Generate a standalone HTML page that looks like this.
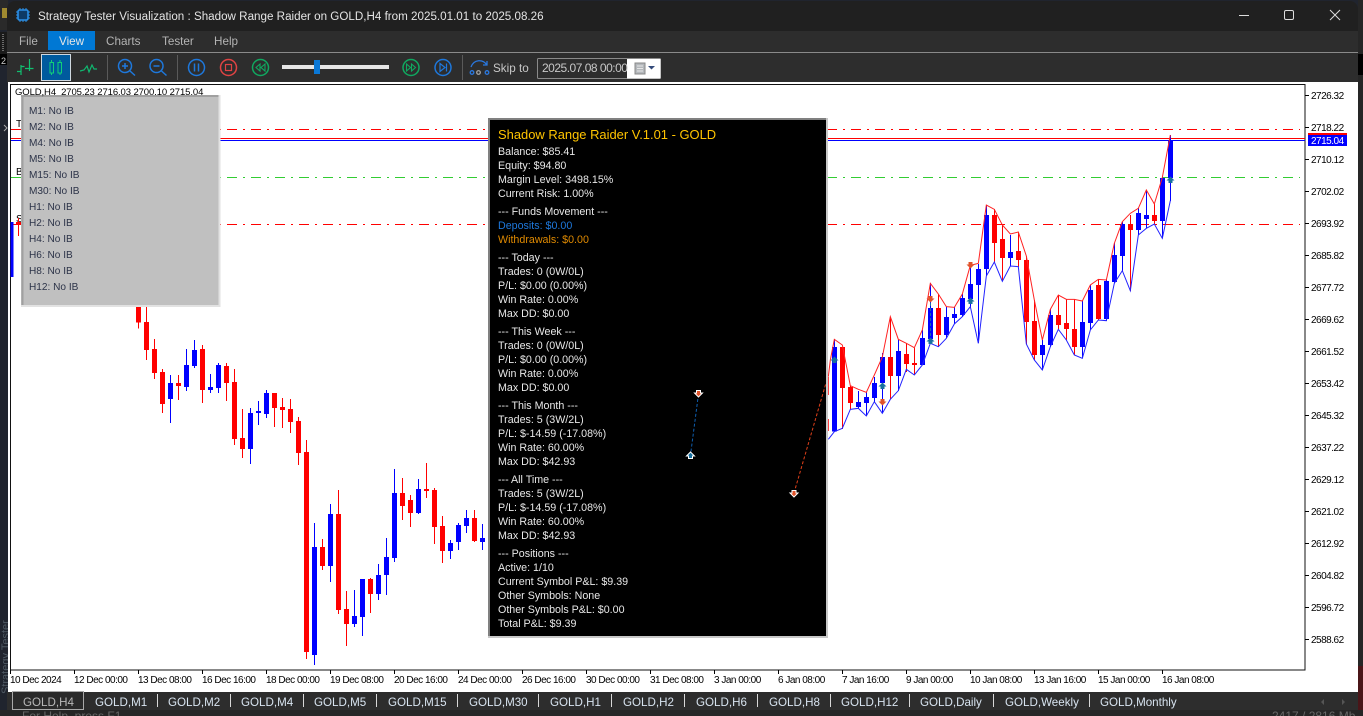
<!DOCTYPE html>
<html><head><meta charset="utf-8"><title>Strategy Tester Visualization</title>
<style>
html,body{margin:0;padding:0;width:1363px;height:716px;overflow:hidden;background:#20242e}
svg{position:absolute;left:0;top:0;font-family:"Liberation Sans",sans-serif}
text{white-space:pre}
.c path{shape-rendering:crispEdges;fill:none}
.m text{font-size:11.7px;fill:#b4b4b4}
.t text{font-size:11.6px;fill:#d8e4f0}
.p text{font-size:10px;fill:#000;letter-spacing:-.5px}
.d text{font-size:10px;fill:#000;letter-spacing:-.5px}
.ib text{font-size:10.1px;fill:#2c3348}
.k text{font-size:10.7px;fill:#e8e8e8}
.ic{fill:none;stroke-width:1.5}
.lv path{shape-rendering:crispEdges}
</style></head><body>
<svg width="1363" height="716" viewBox="0 0 1363 716">
<defs>
<g id="u"><polygon points="0,-3.5 4,0.5 2,0.5 2,3 -2,3 -2,0.5 -4,0.5" fill="#17709f"/></g>
<g id="n"><polygon points="0,3.5 4,-0.5 2,-0.5 2,-3 -2,-3 -2,-0.5 -4,-0.5" fill="#e0532a"/></g>
<g id="uw"><polygon points="0,-3.5 4,0.5 2,0.5 2,3 -2,3 -2,0.5 -4,0.5" fill="#17709f" stroke="#fff" stroke-width="1"/></g>
<g id="nw"><polygon points="0,3.5 4,-0.5 2,-0.5 2,-3 -2,-3 -2,-0.5 -4,-0.5" fill="#e0532a" stroke="#fff" stroke-width="1"/></g>
</defs>

<!-- outside desktop -->
<rect width="1363" height="716" fill="#20242e"/>
<rect x="0" y="0" width="8" height="30" fill="#2a2a2a"/>
<rect x="2" y="8" width="5" height="10" fill="#a08a30"/>
<rect x="0" y="32" width="8" height="22" fill="#1a1a1a"/>
<path d="M3 34V52" stroke="#bbb" stroke-dasharray="1 1" fill="none"/>
<rect x="0" y="54" width="8" height="11" fill="#000"/>
<text x="1" y="64" font-size="9" fill="#ccc">2</text>
<path d="M4 125l3 3-3 3" stroke="#aaa" fill="none"/>
<text transform="translate(9 694) rotate(-90)" font-size="11" fill="#4f5a64">Strategy Tester</text>
<rect x="1358" y="0" width="5" height="716" fill="#262626"/>
<rect x="1358" y="54" width="5" height="21" fill="#000"/>
<rect x="1358" y="666" width="5" height="44" fill="#4a1518"/>
<rect x="0" y="710" width="1363" height="6" fill="#262626"/>
<text x="22" y="720" font-size="12" fill="#666">For Help, press F1</text>
<text x="1272" y="720" font-size="12" fill="#666">2417 / 2816 Mb</text>

<!-- window chrome -->
<path d="M7 82V9a8 8 0 0 1 8-8H1350a8 8 0 0 1 8 8V82Z" fill="#202020"/>
<rect x="7" y="31" width="1351" height="52" fill="#2d2d2d"/>
<rect x="7" y="52" width="1351" height="1" fill="#8a8a8a"/>
<g>
<rect x="18" y="10" width="10" height="10" rx="1.5" fill="#0e3a66" stroke="#2a8fe8" stroke-width="1.6"/>
<path d="M20 8v2M23 8v2M26 8v2M20 20v2M23 20v2M26 20v2M16 12h2M16 15h2M16 18h2M28 12h2M28 15h2M28 18h2" stroke="#2a8fe8" fill="none"/>
</g>
<text x="38" y="20" font-size="11.64" fill="#e4e4e4">Strategy Tester Visualization : Shadow Range Raider on GOLD,H4 from 2025.01.01 to 2025.08.26</text>
<path d="M1239 15.5h10" stroke="#ddd"/>
<rect x="1284.5" y="10.5" width="9" height="9" rx="1.5" fill="none" stroke="#ddd"/>
<path d="M1330 10l10 10M1340 10l-10 10" stroke="#ddd" fill="none"/>

<!-- menu -->
<rect x="48" y="31" width="47" height="19" fill="#0078d4"/>
<g class="m">
<text x="19" y="45">File</text>
<text x="59" y="45" style="fill:#e6e6e6">View</text>
<text x="106" y="45">Charts</text>
<text x="162" y="45">Tester</text>
<text x="214" y="45">Help</text>
</g>

<!-- toolbar -->
<path d="M17 71.5h4M21 65v10M21.5 66.5h3M25 68.5h4M29.5 59v12M29.5 68.5h4" stroke="#10c070" fill="none" stroke-width="1.2"/>
<rect x="41.5" y="54.5" width="29" height="26" fill="#005a9e" stroke="#cfd8e0"/>
<path d="M51.5 60v15M60 60v15" stroke="#10d078"/>
<rect x="50" y="62.5" width="3.5" height="10.5" fill="#005a9e" stroke="#10d078"/>
<rect x="58" y="62.5" width="3.5" height="10.5" fill="#005a9e" stroke="#10d078"/>
<path d="M80 71l4-1 3-4 2 6 3-7 2 4h3" stroke="#10b870" fill="none" stroke-width="1.2"/>
<path d="M107.5 55v25M177.5 55v25M462.5 55v25" stroke="#5a5a5a"/>
<g class="ic" stroke="#1e78dc">
<circle cx="125" cy="66" r="6.5"/><path d="M130 71l5 4.500M122 66h6M125 63v6"/>
<circle cx="156.500" cy="66" r="6.5"/><path d="M161.500 71l5 4.500M153.500 66h6"/>
<circle cx="196.500" cy="67.500" r="8"/><path d="M194.500 63.500v8M198.500 63.500v8"/>
<circle cx="443" cy="67.5" r="8"/><path d="M446.500 63.500v8M440 63.500l5 4-5 4z" stroke-width="1.2"/>
</g>
<g class="ic" stroke="#e04343"><circle cx="228.500" cy="67.500" r="8"/><rect x="225.500" y="64.500" width="6" height="6" stroke-width="1.2"/></g>
<g class="ic" stroke="#10a860"><circle cx="260.500" cy="67.500" r="8"/><path d="M260 64l-4 3.500 4 3.500zM265 64l-4 3.500 4 3.500z" stroke-width="1.1"/>
<circle cx="411" cy="67.500" r="8"/><path d="M406.500 64l4 3.500-4 3.500zM411.500 64l4 3.500-4 3.500z" stroke-width="1.1"/></g>
<rect x="282" y="65" width="107" height="4" fill="#e6e6e6"/>
<rect x="314" y="60" width="6" height="14" fill="#0a78d7"/>
<g fill="none" stroke="#2a78e0" stroke-width="1.3">
<path d="M471 67c3-8 12-8 16-2M487 61v4h-4"/>
<circle cx="472" cy="72.500" r="1.800"/><circle cx="487" cy="72.500" r="1.800"/>
</g>
<circle cx="478.500" cy="72.500" r="1.800" fill="none" stroke="#aaa" stroke-width="1.200"/>
<text x="493" y="72" font-size="11.7" fill="#c8c8c8">Skip to</text>
<rect x="537.500" y="58.500" width="123" height="20" rx="1" fill="#2d2d2d" stroke="#8a8a8a"/>
<rect x="627" y="59" width="33.500" height="19.500" fill="#fff"/>
<text x="542" y="72" font-size="12" letter-spacing="-.5" fill="#c8c8c8">2025.07.08 00:00</text>
<rect x="635" y="63" width="10" height="11" fill="#b4b8bc" stroke="#888"/>
<path d="M637 66h6M637 68.500h6M637 71h6" stroke="#e6e6e6"/>
<path d="M648 66h7l-3.500 3.500z" fill="#334a7a"/>

<!-- chart area -->
<rect x="8" y="82" width="1350" height="610" fill="#fff"/>
<rect x="10.500" y="84.500" width="1294.500" height="585.500" fill="#fff" stroke="#111"/>

<!-- level lines -->
<g fill="none" class="lv">
<path d="M11 129.500H1300" stroke="#f00" stroke-dasharray="10 6 2 6"/>
<path d="M11 138.500H1305" stroke="#f00"/>
<path d="M11 140.500H1305" stroke="#00f"/>
<path d="M11 177.500H1300" stroke="#32cd32" stroke-dasharray="10 6 2 6"/>
<path d="M11 224.500H1300" stroke="#f00" stroke-dasharray="10 6 2 6"/>
</g>
<g font-size="10" fill="#000"><text x="16" y="127">T</text><text x="16" y="175">B</text><text x="16" y="222">S</text></g>

<!-- candles -->
<g class="c">
<path stroke="#00f" stroke-width="3" d="M12 222V277"/>
<path stroke="#f00" stroke-width="1" d="M18.500 218V236
M138.500 295V328.500M146.500 300V360M154.500 339V379M162.500 369V413M178.500 375V400M202.500 345V403M226.500 363V401M234.500 369V445M242.500 409V458M274.500 393V427M282.500 398V428M290.500 399V433M298.500 417V465M306.500 440V659M322.500 539V570M338.500 490V614M346.500 591V646M370.500 578V613M402.500 478V520M410.500 495V527M426.500 463V498M434.500 488V544M442.500 516V563M474.500 510V542
M842.500 347V429M850.500 386V409M890.500 317V399M906.500 343V372M914.500 348V375M938.500 294V347M994.500 209V262M1002.500 225V281M1018.500 232V267M1026.500 256V344M1034.500 300V360M1058.500 295V329M1066.500 299V340M1074.500 299V355M1098.500 280V320M1130.500 215V291M1154.500 204V224"/>
<path stroke="#00f" stroke-width="1" d="M170.500 375V423M186.500 349V391M194.500 340V368M210.500 374V393M218.500 363V393M250.500 408V464M258.500 401V425M266.500 390V418M314.500 523V665M330.500 504V582M354.500 590V627M362.500 579V636M378.500 564V600M386.500 538V595M394.500 469V562M418.500 479V514M450.500 540V559M458.500 523V550M466.500 510V533M482.500 524V550
M834.500 339V432M858.500 391V408M866.500 392V416M874.500 377V402M882.500 353V413M898.500 340V391M922.500 330V365M930.500 283V343M946.500 307V338M954.500 307V324M962.500 294V317M970.500 263V307M978.500 264V343M986.500 205V276M1010.500 235V266M1042.500 340V370M1050.500 309V347M1082.500 301V358M1090.500 285V330M1106.500 279V321M1114.500 243V283M1122.500 222V271M1138.500 208V235M1146.500 190V228M1162.500 177V238M1170.500 135V201"/>
<path stroke="#f00" stroke-width="5" d="M18.500 222V224
M138.500 295V322.500M146.500 322V350M154.500 349V373M162.500 372V404M178.500 383V386M202.500 349V390M226.500 366V383M234.500 382V439M242.500 438V449M274.500 393V408M282.500 407V410M290.500 409V422M298.500 421V453M306.500 452V652M322.500 547V566M338.500 514V610M346.500 609V624M370.500 579V594M402.500 493V506M410.500 500V513M426.500 489V491M434.500 490V527M442.500 526V551M474.500 518V541
M842.500 347V388M850.500 387V403M890.500 357V376M906.500 354V364M914.500 363V365M938.500 308V335M994.500 215V243M1002.500 239V258M1018.500 251V260M1026.500 260V322M1034.500 321V355M1058.500 315V325M1066.500 323V329M1074.500 329V347M1098.500 285V319M1130.500 224V230M1154.500 215V221"/>
<path stroke="#00f" stroke-width="5" d="M170.500 383V399M186.500 365V387M194.500 350V366M210.500 387V390M218.500 365V388M250.500 413V449M258.500 411V413M266.500 393V414M314.500 547V655M330.500 514V566M354.500 616V624M362.500 579V617M378.500 575V594M386.500 557V575M394.500 493V558M418.500 489V513M450.500 543V551M458.500 525V542M466.500 518V526M482.500 538V542
M834.500 347V431.500M858.500 402V407M866.500 397V403M874.500 383V398M882.500 357V383M898.500 351V376M922.500 338V365M930.500 308V339M946.500 317V335M954.500 314V318M962.500 298V315M970.500 284V299M978.500 269V285M986.500 215V269M1010.500 252V258M1042.500 345V355M1050.500 315V345M1082.500 322V347M1090.500 290V323M1106.500 281V319M1114.500 255V282M1122.500 224V256M1138.500 213V230M1146.500 215V219M1162.500 178V221M1170.500 140V178"/>
</g>

<!-- envelope lines -->
<g transform="translate(825 120) scale(.33333)" fill="none">
<polyline vector-effect="non-scaling-stroke" stroke="#f22" stroke-width="1" points="10,770 16,720 28,658 52,675 76,797 100,808 124,817 148,765 172,711 196,590 220,658 244,670 268,683 292,630 316,490 340,522 364,560 388,562 412,522 436,436 460,430 484,255 508,268 532,315 556,342 580,336 604,408 628,540 652,660 676,568 700,525 724,538 748,538 772,543 796,495 820,478 844,480 868,370 892,305 916,280 940,265 964,210 988,252 1012,172 1036,45"/>
<polyline vector-effect="non-scaling-stroke" stroke="#22f" stroke-width="1" points="10,958 28,935 52,925 76,868 100,865 124,888 148,845 172,880 196,838 220,812 244,748 268,765 292,735 316,670 340,680 364,655 388,612 412,590 436,560 460,670 484,468 508,426 532,484 556,438 580,440 604,672 628,720 652,750 676,680 700,628 724,660 748,705 772,715 796,630 820,600 844,602 868,490 892,452 916,512 940,345 964,325 988,312 1012,355 1036,242"/>
</g>
<path d="M828 377v18M828 419v12" stroke="#f00" stroke-width="1.500" fill="none"/>
<path d="M930.500 298V340" stroke="#17709f" stroke-dasharray="3 2" fill="none"/>
<use href="#u" x="834.500" y="360"/>
<use href="#u" x="882.500" y="386"/>
<use href="#n" x="882.500" y="402"/>
<use href="#n" x="930.500" y="299"/>
<use href="#u" x="930.500" y="341"/>
<use href="#n" x="970.500" y="265"/>
<use href="#u" x="970.500" y="301"/>
<use href="#u" x="1170.500" y="180"/>

<!-- IB panel -->
<rect x="21" y="95" width="199.500" height="212" fill="#c0c0c0"/>
<path d="M21 96H220.500M22.500 95V307" stroke="#a0a0a0" stroke-width="2" fill="none"/>
<path d="M21 306H220.500M219.500 95V307" stroke="#e2e2e2" stroke-width="2" fill="none"/>
<g class="ib">
<text x="29" y="114">M1: No IB</text><text x="29" y="130">M2: No IB</text><text x="29" y="146">M4: No IB</text><text x="29" y="162">M5: No IB</text><text x="29" y="178">M15: No IB</text><text x="29" y="194">M30: No IB</text><text x="29" y="210">H1: No IB</text><text x="29" y="226">H2: No IB</text><text x="29" y="242">H4: No IB</text><text x="29" y="258">H6: No IB</text><text x="29" y="274">H8: No IB</text><text x="29" y="290">H12: No IB</text>
</g>
<text x="15" y="95" font-size="9.500" letter-spacing="-.1" fill="#000">GOLD,H4  2705.23 2716.03 2700.10 2715.04</text>

<!-- stats panel -->
<rect x="489.500" y="119" width="338" height="518" fill="#000"/>
<path d="M488 119H828" stroke="#808080" stroke-width="2" fill="none"/>
<path d="M489 118V637" stroke="#808080" stroke-width="2" fill="none"/>
<path d="M827 118V638M488 637H828" stroke="#c8c8c8" stroke-width="2" fill="none"/>
<text x="498" y="139" font-size="12.950" fill="#ffc400">Shadow Range Raider V.1.01 - GOLD</text>
<g class="k">
<text x="498" y="155">Balance: $85.41</text>
<text x="498" y="169">Equity: $94.80</text>
<text x="498" y="183">Margin Level: 3498.15%</text>
<text x="498" y="197">Current Risk: 1.00%</text>
<text x="498" y="215">--- Funds Movement ---</text>
<text x="498" y="229" style="fill:#1e78dc">Deposits: $0.00</text>
<text x="498" y="243" style="fill:#e08a00">Withdrawals: $0.00</text>
<text x="498" y="261">--- Today ---</text>
<text x="498" y="275">Trades: 0 (0W/0L)</text>
<text x="498" y="289">P/L: $0.00 (0.00%)</text>
<text x="498" y="303">Win Rate: 0.00%</text>
<text x="498" y="317">Max DD: $0.00</text>
<text x="498" y="335">--- This Week ---</text>
<text x="498" y="349">Trades: 0 (0W/0L)</text>
<text x="498" y="363">P/L: $0.00 (0.00%)</text>
<text x="498" y="377">Win Rate: 0.00%</text>
<text x="498" y="391">Max DD: $0.00</text>
<text x="498" y="409">--- This Month ---</text>
<text x="498" y="423">Trades: 5 (3W/2L)</text>
<text x="498" y="437">P/L: $-14.59 (-17.08%)</text>
<text x="498" y="451">Win Rate: 60.00%</text>
<text x="498" y="465">Max DD: $42.93</text>
<text x="498" y="483">--- All Time ---</text>
<text x="498" y="497">Trades: 5 (3W/2L)</text>
<text x="498" y="511">P/L: $-14.59 (-17.08%)</text>
<text x="498" y="525">Win Rate: 60.00%</text>
<text x="498" y="539">Max DD: $42.93</text>
<text x="498" y="557">--- Positions ---</text>
<text x="498" y="571">Active: 1/10</text>
<text x="498" y="585">Current Symbol P&amp;L: $9.39</text>
<text x="498" y="599">Other Symbols: None</text>
<text x="498" y="613">Other Symbols P&amp;L: $0.00</text>
<text x="498" y="627">Total P&amp;L: $9.39</text>
</g>
<!-- trade objects over panel -->
<path d="M698.500 394L690.500 455" stroke="#0f5fb0" stroke-dasharray="3 2" fill="none"/>
<path d="M794 493L826 383" stroke="#e0401a" stroke-dasharray="3 2" fill="none"/>
<use href="#nw" x="698.500" y="393.500"/>
<use href="#uw" x="690.500" y="455.500"/>
<use href="#nw" x="794" y="493.500"/>

<!-- price axis -->
<path stroke="#000" fill="none" d="M1305 95.500h4M1305 127.500h4M1305 159.500h4M1305 191.500h4M1305 223.500h4M1305 255.500h4M1305 287.500h4M1305 319.500h4M1305 351.500h4M1305 383.500h4M1305 415.500h4M1305 447.500h4M1305 479.500h4M1305 511.500h4M1305 543.500h4M1305 575.500h4M1305 607.500h4M1305 639.500h4"/>
<g class="p">
<text x="1311" y="99">2726.32</text><text x="1311" y="131">2718.22</text><text x="1311" y="163">2710.12</text><text x="1311" y="195">2702.02</text><text x="1311" y="227">2693.92</text><text x="1311" y="259">2685.82</text><text x="1311" y="291">2677.72</text><text x="1311" y="323">2669.62</text><text x="1311" y="355">2661.52</text><text x="1311" y="387">2653.42</text><text x="1311" y="419">2645.32</text><text x="1311" y="451">2637.22</text><text x="1311" y="483">2629.12</text><text x="1311" y="515">2621.02</text><text x="1311" y="547">2612.92</text><text x="1311" y="579">2604.82</text><text x="1311" y="611">2596.72</text><text x="1311" y="643">2588.62</text>
</g>
<rect x="1308" y="133" width="39" height="2" fill="#f00"/>
<rect x="1308" y="135" width="39" height="11" fill="#00f"/>
<text x="1311" y="144" font-size="10" letter-spacing="-.5" fill="#fff">2715.04</text>

<!-- time axis -->
<path stroke="#000" fill="none" d="M10.500 670v4M74.500 670v4M138.500 670v4M202.500 670v4M266.500 670v4M330.500 670v4M394.500 670v4M458.500 670v4M522.500 670v4M586.500 670v4M650.500 670v4M714.500 670v4M778.500 670v4M842.500 670v4M906.500 670v4M970.500 670v4M1034.500 670v4M1098.500 670v4M1162.500 670v4"/>
<g class="d">
<text x="10" y="683">10 Dec 2024</text><text x="74" y="683">12 Dec 00:00</text><text x="138" y="683">13 Dec 08:00</text><text x="202" y="683">16 Dec 16:00</text><text x="266" y="683">18 Dec 00:00</text><text x="330" y="683">19 Dec 08:00</text><text x="394" y="683">20 Dec 16:00</text><text x="458" y="683">24 Dec 00:00</text><text x="522" y="683">26 Dec 16:00</text><text x="586" y="683">30 Dec 00:00</text><text x="650" y="683">31 Dec 08:00</text><text x="714" y="683">3 Jan 00:00</text><text x="778" y="683">6 Jan 08:00</text><text x="842" y="683">7 Jan 16:00</text><text x="906" y="683">9 Jan 00:00</text><text x="970" y="683">10 Jan 08:00</text><text x="1034" y="683">13 Jan 16:00</text><text x="1098" y="683">15 Jan 00:00</text><text x="1162" y="683">16 Jan 08:00</text>
</g>

<!-- tabs -->
<rect x="7" y="692" width="1351" height="18" fill="#2d2d2d"/>
<rect x="12.500" y="691.500" width="71" height="18" fill="#2a2a2a" stroke="#a8a8a8"/>
<path stroke="#d8d8d8" fill="none" d="M157.500 694v13M230.500 694v13M303.500 694v13M376.500 694v13M457.500 694v13M538.500 694v13M611.500 694v13M684.500 694v13M757.500 694v13M830.500 694v13M909.500 694v13M993.500 694v13M1089.500 694v13"/>
<g class="t">
<text x="23" y="706" style="fill:#b8b8b8">GOLD,H4</text>
<text x="95" y="706">GOLD,M1</text><text x="168" y="706">GOLD,M2</text><text x="241" y="706">GOLD,M4</text><text x="314" y="706">GOLD,M5</text><text x="388" y="706">GOLD,M15</text><text x="469" y="706">GOLD,M30</text><text x="550" y="706">GOLD,H1</text><text x="623" y="706">GOLD,H2</text><text x="696" y="706">GOLD,H6</text><text x="769" y="706">GOLD,H8</text><text x="841" y="706">GOLD,H12</text><text x="920" y="706">GOLD,Daily</text><text x="1005" y="706">GOLD,Weekly</text><text x="1100" y="706">GOLD,Monthly</text>
</g>
<path d="M1324 699l-3 3 3 3zM1342 699l3 3-3 3z" fill="#555"/>
</svg>
</body></html>
